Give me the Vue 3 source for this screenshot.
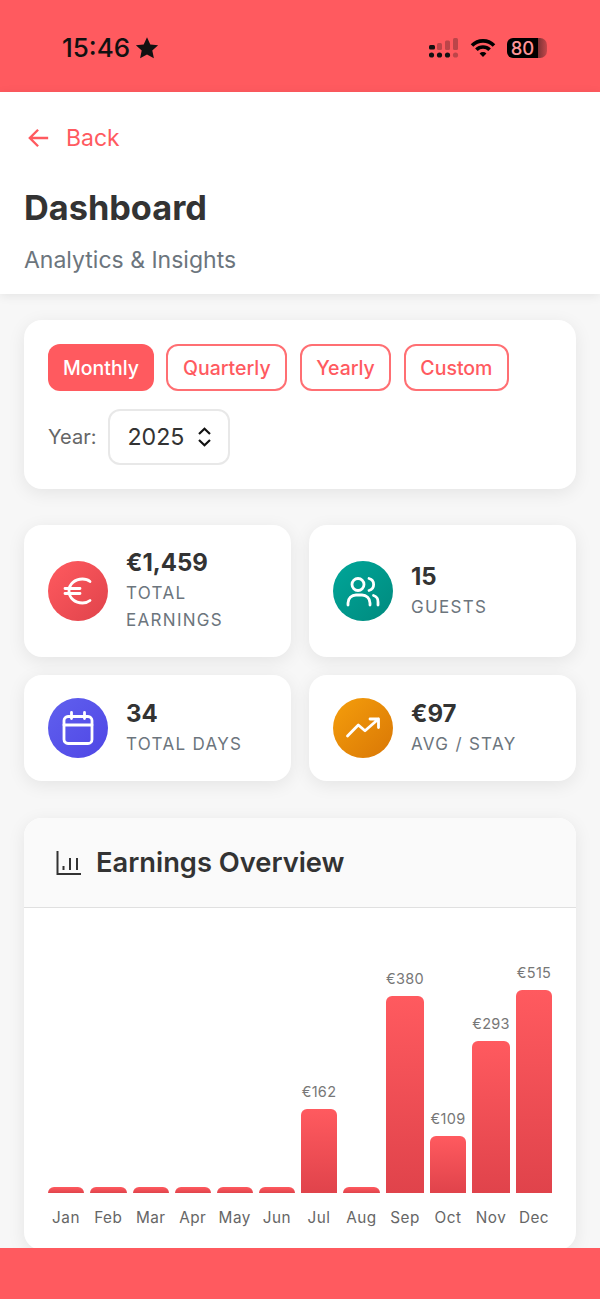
<script setup>
const months = [
  { name: 'Jan', width: 36, height: 6 },
  { name: 'Feb', width: 36.5, height: 6 },
  { name: 'Mar', width: 36.5, height: 6 },
  { name: 'Apr', width: 35.5, height: 6 },
  { name: 'May', width: 36.5, height: 6 },
  { name: 'Jun', width: 36, height: 6 },
  { name: 'Jul', width: 36, height: 84, value: '€162' },
  { name: 'Aug', width: 37, height: 6 },
  { name: 'Sep', width: 38, height: 197, value: '€380' },
  { name: 'Oct', width: 36, height: 57, value: '€109' },
  { name: 'Nov', width: 38, height: 152, value: '€293' },
  { name: 'Dec', width: 36, height: 203, value: '€515' }
]
const columns = months.map((m) => m.width + 'px').join(' ')
</script>

<template>
  <div class="screen">
    <div class="status">
      <div class="clock">
        <span>15:46</span>
        <svg class="star" viewBox="0 0 24 24"><path d="M12 1.2l3.3 7.2 7.8.9-5.8 5.3 1.6 7.7L12 18.4l-6.9 3.9 1.6-7.7L.9 9.3l7.8-.9z" /></svg>
      </div>
      <div class="indicators">
        <svg class="signal" width="30" height="22" viewBox="0 0 30 22">
          <rect x="0" y="7" width="6" height="4.5" rx="1.5" />
          <circle cx="2.5" cy="17" r="2.6" />
          <circle cx="10.5" cy="17" r="2.6" />
          <circle cx="18.5" cy="17" r="2.6" />
          <g opacity=".28">
            <rect x="8" y="5" width="5" height="7" rx="1.5" />
            <rect x="16" y="2.5" width="5" height="9.5" rx="1.5" />
            <rect x="24" y="0" width="5" height="12" rx="1.5" />
            <circle cx="26.5" cy="17" r="2.6" />
          </g>
        </svg>
        <svg class="wifi" width="26" height="20" viewBox="0 0 26 20">
          <path d="M2 7.5a15.5 15.5 0 0 1 22 0" />
          <path d="M6.4 11.8a9.3 9.3 0 0 1 13.2 0" />
          <path class="wifi-dot" d="M13 19l-3.4-3.6a4.8 4.8 0 0 1 6.8 0z" />
        </svg>
        <div class="battery">
          <span class="battery-level">80</span>
          <span class="battery-rest"></span>
        </div>
      </div>
    </div>

    <header class="page-head">
      <div class="back">
        <svg width="22" height="22" viewBox="0 0 24 24"><path d="M22 12H2.5M11 3l-9 9 9 9" /></svg>
        <span>Back</span>
      </div>
      <h1>Dashboard</h1>
      <p>Analytics &amp; Insights</p>
    </header>

    <main class="content">
      <section class="card filters">
        <div class="tabs">
          <button class="tab active">Monthly</button>
          <button class="tab">Quarterly</button>
          <button class="tab">Yearly</button>
          <button class="tab">Custom</button>
        </div>
        <div class="year-row">
          <span class="year-label">Year:</span>
          <div class="year-select">
            <span>2025</span>
            <svg width="15" height="20" viewBox="0 0 15 20"><path d="M2 7l5.5-5.2L13 7M2 13l5.5 5.2L13 13" /></svg>
          </div>
        </div>
      </section>

      <section class="stats">
        <div class="card stat">
          <div class="bubble red">
            <svg width="30" height="30" viewBox="0 0 30 30"><path d="M27 5.500C24.800 3.600 22 3 19.500 3 12 3 6 8 6 15s6 12 13.500 12c2.500 0 5.300-.6 7.500-2.500M2 12.500h15M2 17.500h15" /></svg>
          </div>
          <div class="stat-text">
            <div class="stat-value">€1,459</div>
            <div class="stat-label">Total Earnings</div>
          </div>
        </div>
        <div class="card stat">
          <div class="bubble teal">
            <svg width="34" height="34" viewBox="0 0 34 34"><circle cx="12" cy="10.500" r="6" /><path d="M2 31v-2a8 8 0 0 1 8-8h6a8 8 0 0 1 8 8v2M23 4.500a6.200 6.200 0 0 1 0 12M27.500 21.500a6.500 6.500 0 0 1 4.500 6.500v3" /></svg>
          </div>
          <div class="stat-text">
            <div class="stat-value">15</div>
            <div class="stat-label">Guests</div>
          </div>
        </div>
        <div class="card stat">
          <div class="bubble indigo">
            <svg width="32" height="34" viewBox="0 0 32 34"><rect x="2" y="5.500" width="28" height="27" rx="4" /><path d="M2 14h28M9.500 1.500v6M22.500 1.500v6" /></svg>
          </div>
          <div class="stat-text">
            <div class="stat-value">34</div>
            <div class="stat-label">Total Days</div>
          </div>
        </div>
        <div class="card stat">
          <div class="bubble amber">
            <svg width="36" height="22" viewBox="0 0 36 22"><path d="M2.500 19L13.300 8l6.700 5.800L33.500 2M25 2h8.500v8.500" /></svg>
          </div>
          <div class="stat-text">
            <div class="stat-value">€97</div>
            <div class="stat-label">Avg / Stay</div>
          </div>
        </div>
      </section>

      <section class="card chart">
        <div class="chart-head">
          <svg width="26" height="26" viewBox="0 0 26 26"><path d="M2.500 1v23H26M8.500 16v4M15 8v12M22 8v12" /></svg>
          <h2>Earnings Overview</h2>
        </div>
        <div class="chart-body" :style="{ gridTemplateColumns: columns }">
          <div v-for="m in months" :key="m.name" class="col">
            <span v-if="m.value" class="bar-value">{{ m.value }}</span>
            <div class="bar" :style="{ height: m.height + 'px' }"></div>
            <span class="month">{{ m.name }}</span>
          </div>
        </div>
      </section>
    </main>

    <div class="bottom-band"></div>
  </div>
</template>

<style scoped>
.screen {
  position: relative;
  width: 600px;
  height: 1299px;
  overflow: hidden;
  background: #f7f7f7;
  font-family: Inter, "Liberation Sans", sans-serif;
  color: #333;
}
.status {
  height: 92px;
  box-sizing: border-box;
  background: #ff5a5f;
  display: flex;
  justify-content: space-between;
  align-items: center;
  padding: 3px 53px 0 62px;
  color: #111;
}
.clock {
  display: flex;
  align-items: center;
  gap: 5px;
  font-size: 26px;
  font-weight: 500;
}
.star {
  width: 24px;
  height: 24px;
  fill: #111;
}
.indicators {
  display: flex;
  align-items: center;
  gap: 9px;
}
.signal {
  fill: #111;
  margin-right: 2px;
  margin-top: 2px;
}
.wifi {
  fill: none;
  stroke: #000;
  stroke-width: 3.6;
}
.wifi-dot {
  fill: #000;
  stroke: none;
}
.battery {
  display: flex;
  height: 20px;
  margin-left: 2px;
}
.battery-level {
  width: 31px;
  background: #000;
  color: #ff9497;
  border-radius: 6px 0 0 6px;
  font-size: 18.5px;
  font-weight: 500;
  line-height: 20px;
  text-align: center;
}
.battery-rest {
  width: 9px;
  background: linear-gradient(90deg, rgba(17, 17, 17, 0.55), rgba(17, 17, 17, 0.25));
  border-radius: 0 7px 7px 0;
}
.page-head {
  position: relative;
  height: 202px;
  box-sizing: border-box;
  padding: 32px 24px 0;
  background: #fff;
  box-shadow: 0 2px 10px rgba(0, 0, 0, 0.08);
}
.back {
  display: flex;
  align-items: center;
  gap: 16px;
  height: 28px;
  padding-left: 4px;
  color: #ff5a5f;
  font-size: 23px;
}
.back svg {
  fill: none;
  stroke: currentColor;
  stroke-width: 2.6;
}
h1 {
  margin: 35px 0 0;
  font-size: 34.300px;
  line-height: 42px;
  font-weight: 700;
}
.page-head p {
  margin: 16px 0 0;
  font-size: 23px;
  line-height: 30px;
  color: #6c757d;
}
.content {
  padding: 26px 24px 0;
  display: flex;
  flex-direction: column;
}
.card {
  background: #fff;
  border-radius: 18px;
  box-shadow: 0 4px 18px rgba(0, 0, 0, 0.08);
}
.filters {
  height: 169px;
  box-sizing: border-box;
  padding: 24px;
}
.tabs {
  display: flex;
  gap: 12.5px;
}
.tab {
  height: 47px;
  padding: 0 14.5px;
  border: 2px solid #ff6f73;
  border-radius: 12px;
  background: #fff;
  color: #ff5a5f;
  font: 500 19.5px Inter, "Liberation Sans", sans-serif;
}
.tab.active {
  padding: 0 15px;
  border: none;
  background: #ff5a5f;
  color: #fff;
}
.year-row {
  display: flex;
  align-items: center;
  gap: 12px;
  margin-top: 18px;
}
.year-label {
  font-size: 20px;
  color: #666;
}
.year-select {
  width: 122px;
  height: 56px;
  box-sizing: border-box;
  display: flex;
  align-items: center;
  gap: 13px;
  padding-left: 17px;
  border: 2px solid #e8e8e8;
  border-radius: 12px;
  font-size: 23.2px;
}
.year-select svg {
  fill: none;
  stroke: #111;
  stroke-width: 2.2;
}
.stats {
  display: grid;
  grid-template-columns: 267px 267px;
  column-gap: 18px;
  row-gap: 18px;
  margin-top: 36px;
}
.stat {
  display: flex;
  align-items: center;
  gap: 18px;
  padding: 23px 24px;
}
.bubble {
  flex: none;
  width: 60px;
  height: 60px;
  border-radius: 50%;
  display: flex;
  align-items: center;
  justify-content: center;
}
.bubble svg {
  fill: none;
  stroke: #fff;
  stroke-width: 2.8;
  stroke-linecap: round;
  stroke-linejoin: round;
}
.red { background: linear-gradient(135deg, #ff5a5f, #e0434b); }
.teal { background: linear-gradient(135deg, #00a699, #008a7e); }
.indigo { background: linear-gradient(135deg, #6060ee, #4f46e5); }
.amber { background: linear-gradient(135deg, #f59e0b, #d97706); }
.stat-value {
  margin-bottom: 2px;
  font-size: 24px;
  line-height: 30px;
  font-weight: 700;
}
.stat-label {
  font-size: 17px;
  line-height: 27px;
  letter-spacing: 1.3px;
  text-transform: uppercase;
  color: #6c757d;
}
.chart {
  margin-top: 37px;
  height: 432px;
  overflow: hidden;
}
.chart-head {
  height: 90px;
  box-sizing: border-box;
  display: flex;
  align-items: center;
  gap: 15px;
  padding-left: 31px;
  background: #fafafa;
  border-bottom: 1px solid #e0e0e0;
}
.chart-head svg {
  fill: none;
  stroke: #333;
  stroke-width: 2;
}
h2 {
  margin: 0;
  font-size: 27.300px;
  font-weight: 600;
}
.chart-body {
  display: grid;
  column-gap: 6px;
  height: 300px;
  padding: 20px 24px 0;
  align-items: end;
}
.col {
  display: flex;
  flex-direction: column;
  align-items: stretch;
}
.bar-value {
  margin-bottom: 8px;
  text-align: center;
  font-size: 14.5px;
  line-height: 18px;
  letter-spacing: 0.3px;
  color: #777;
  white-space: nowrap;
}
.bar {
  border-radius: 6px 6px 0 0;
  background: linear-gradient(180deg, #ff5a5f, #e0434b);
}
.month {
  margin-top: 14px;
  margin-bottom: -1px;
  text-align: center;
  font-size: 15.300px;
  line-height: 22px;
  letter-spacing: 0.5px;
  color: #666;
}
.bottom-band {
  position: absolute;
  left: 0;
  right: 0;
  bottom: 0;
  height: 51px;
  background: #ff5a5f;
}
</style>

<style>
body {
  background: #f7f7f7;
}
</style>
